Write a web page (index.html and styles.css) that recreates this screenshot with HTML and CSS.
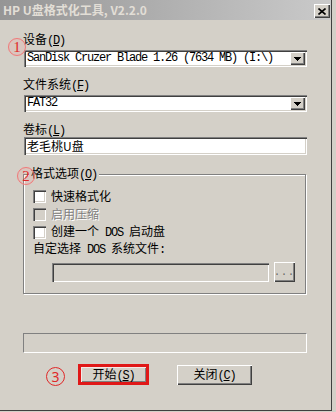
FILE: index.html
```html
<!DOCTYPE html>
<html lang="zh-CN">
<head>
  <meta charset="UTF-8" />
  <title>HP U盘格式化工具</title>
  <link rel="stylesheet" href="styles.css">
</head>
<body>
  <div class="window">
    <div class="titlebar">
      <span class="title">HP U盘格式化工具, V2.2.0</span>
      <span class="close">
        <svg width="8" height="7" viewBox="0 0 8 7"><path d="M0.5 0.5L7.5 6.5M7.5 0.5L0.5 6.5" stroke="#000" stroke-width="1.6" fill="none"/></svg>
      </span>
    </div>

    <div class="content">
      <div class="label">设备<span class="en">(<u>D</u>)</span></div>
      <div class="combo sunken">
        <span class="value en">SanDisk Cruzer Blade 1.26 (7634 MB) (I:\)</span>
        <span class="drop"><svg width="7" height="4" viewBox="0 0 7 4"><path d="M0 0h7v1h-1v1h-1v1h-1v1h-1v-1h-1v-1h-1v-1h-1z" fill="#000"/></svg></span>
      </div>

      <div class="label">文件系统<span class="en">(<u>F</u>)</span></div>
      <div class="combo sunken">
        <span class="value en">FAT32</span>
        <span class="drop"><svg width="7" height="4" viewBox="0 0 7 4"><path d="M0 0h7v1h-1v1h-1v1h-1v1h-1v-1h-1v-1h-1v-1h-1z" fill="#000"/></svg></span>
      </div>

      <div class="label tight">卷标<span class="en">(<u>L</u>)</span></div>
      <div class="textbox sunken">老毛桃U盘</div>

      <fieldset class="group">
        <legend>格式选项<span class="en">(<u>O</u>)</span></legend>
        <div class="check"><span class="box sunken"></span><span>快速格式化</span></div>
        <div class="check disabled"><span class="box sunken"></span><span>启用压缩</span></div>
        <div class="check"><span class="box sunken"></span><span>创建一个<span class="en">&nbsp;DOS&nbsp;</span>启动盘</span></div>
        <div class="hint">自定选择<span class="en">&nbsp;DOS&nbsp;</span>系统文件<span class="en">:</span></div>
        <div class="file-row">
          <div class="file-input sunken"></div>
          <div class="browse raised">...</div>
        </div>
      </fieldset>

      <div class="progress"></div>

      <div class="actions">
        <button class="btn btn-start"><span>开始<span class="en">(<u>S</u>)</span></span></button>
        <button class="btn btn-close raised"><span>关闭<span class="en">(<u>C</u>)</span></span></button>
      </div>
    </div>

    <span class="mark mark-1">1</span>
    <span class="mark mark-2">2</span>
    <span class="mark mark-3">3</span>
  </div>
</body>
</html>
```

FILE: styles.css
```css
* {
  box-sizing: border-box;
}

body {
  margin: 0;
  background: #d4d0c8;
  color: #000;
  font-family: "Noto Sans CJK SC", sans-serif;
  font-size: 12px;
}

.window {
  position: relative;
  width: 332px;
  height: 411px;
  border-right: 1px solid #404040;
  border-bottom: 1px solid #404040;
}

.titlebar {
  height: 20px;
  display: flex;
  justify-content: space-between;
  align-items: flex-start;
  padding: 3px 1px 0 3px;
  background: linear-gradient(90deg, #959595, #cacaca);
}

.title {
  font-weight: 700;
  line-height: 14px;
  color: #e2ded6;
}

.close {
  width: 16px;
  height: 14px;
  margin-top: 1px;
  display: flex;
  align-items: center;
  justify-content: center;
  background: #d4d0c8;
  box-shadow: inset 1px 1px #fff, inset -1px -1px #404040, inset -2px -2px #808080;
}

.en {
  font-family: "Liberation Mono", monospace;
  font-size: 12px;
  letter-spacing: -1.2px;
}

.sunken {
  box-shadow: inset 1px 1px #808080, inset 2px 2px #404040, inset -1px -1px #fff, inset -2px -2px #d4d0c8;
}

.raised {
  background: #d4d0c8;
  box-shadow: inset 1px 1px #fff, inset -1px -1px #404040, inset -2px -2px #808080;
}

.content {
  padding: 12px 0 0 23px;
}

.label {
  height: 14px;
  line-height: 14px;
  margin-bottom: 4px;
}

.label.tight {
  margin-bottom: 1px;
}

.combo {
  display: flex;
  align-items: stretch;
  width: 283px;
  height: 17px;
  margin: 0 0 10px 1px;
  padding: 2px;
  background: #fff;
}

.combo .value {
  flex: 1;
  padding-left: 1px;
  line-height: 13px;
}

.drop {
  width: 15px;
  display: flex;
  align-items: center;
  justify-content: center;
  background: #d4d0c8;
  box-shadow: inset 1px 1px #fff, inset -1px -1px #404040, inset -2px -2px #808080;
}

.textbox {
  width: 283px;
  height: 18px;
  margin-left: 1px;
  padding: 2px 3px;
  line-height: 14px;
  background: #fff;
}

.group {
  width: 283px;
  min-width: 0;
  margin: 11px 0 0;
  padding: 5px 10px 11px 5px;
  border: 1px solid #808080;
  box-shadow: inset 1px 1px #fff, 1px 1px #fff;
}

.group legend {
  padding: 0 2px;
  line-height: 14px;
  background: #d4d0c8;
}

.check {
  display: flex;
  align-items: center;
  gap: 5px;
  height: 18px;
  margin-left: 4px;
  line-height: 14px;
}

.check .box {
  width: 13px;
  height: 13px;
  background: #fff;
}

.check.disabled {
  color: #808080;
  text-shadow: 1px 1px 0 #fff;
}

.check.disabled .box {
  background: #d4d0c8;
}

.hint {
  height: 14px;
  line-height: 14px;
  margin-left: 4px;
}

.file-row {
  display: flex;
  align-items: flex-start;
  margin: 8px 0 0 23px;
}

.file-input {
  width: 219px;
  height: 19px;
  background: #d4d0c8;
}

.browse {
  width: 21px;
  height: 20px;
  margin: -1px 0 0 5px;
  padding-top: 6px;
  text-align: center;
  font-family: "Liberation Mono", monospace;
  font-size: 10px;
  line-height: 10px;
  letter-spacing: 1px;
  color: #606060;
}

.progress {
  width: 284px;
  height: 20px;
  margin-top: 39px;
  border: 1px solid;
  border-color: #808080 #fff #fff #808080;
}

.actions {
  display: flex;
  align-items: flex-start;
  margin-top: 11px;
  padding-left: 55px;
}

.btn {
  height: 20px;
  padding: 0;
  border: 0;
  display: flex;
  align-items: center;
  justify-content: center;
  font: inherit;
  line-height: 14px;
  color: #000;
  background: #d4d0c8;
}

.btn-start {
  width: 71px;
  height: 21px;
  border: 3px solid #e01818;
  box-shadow: inset 1px 1px #f6e8e6, inset -1px -1px #808080;
}

.btn-close {
  width: 75px;
  margin: 1px 0 0 28px;
}

.mark {
  position: absolute;
  display: flex;
  align-items: center;
  justify-content: center;
  border-radius: 50%;
  font-family: "Liberation Serif", serif;
  color: #e02828;
}

.mark-1,
.mark-2 {
  width: 18px;
  height: 18px;
  border: 1px solid #ef7a7a;
  background: rgba(255, 140, 140, 0.15);
  box-shadow: 0 0 1px #f5b0b0;
  font-size: 15px;
}

.mark-1 {
  left: 8px;
  top: 38px;
}

.mark-2 {
  left: 17px;
  top: 167px;
}

.mark-3 {
  left: 46px;
  top: 367px;
  width: 19px;
  height: 19px;
  border: 1px solid #e02828;
  font-family: "Noto Sans", sans-serif;
  font-size: 14px;
}
```
